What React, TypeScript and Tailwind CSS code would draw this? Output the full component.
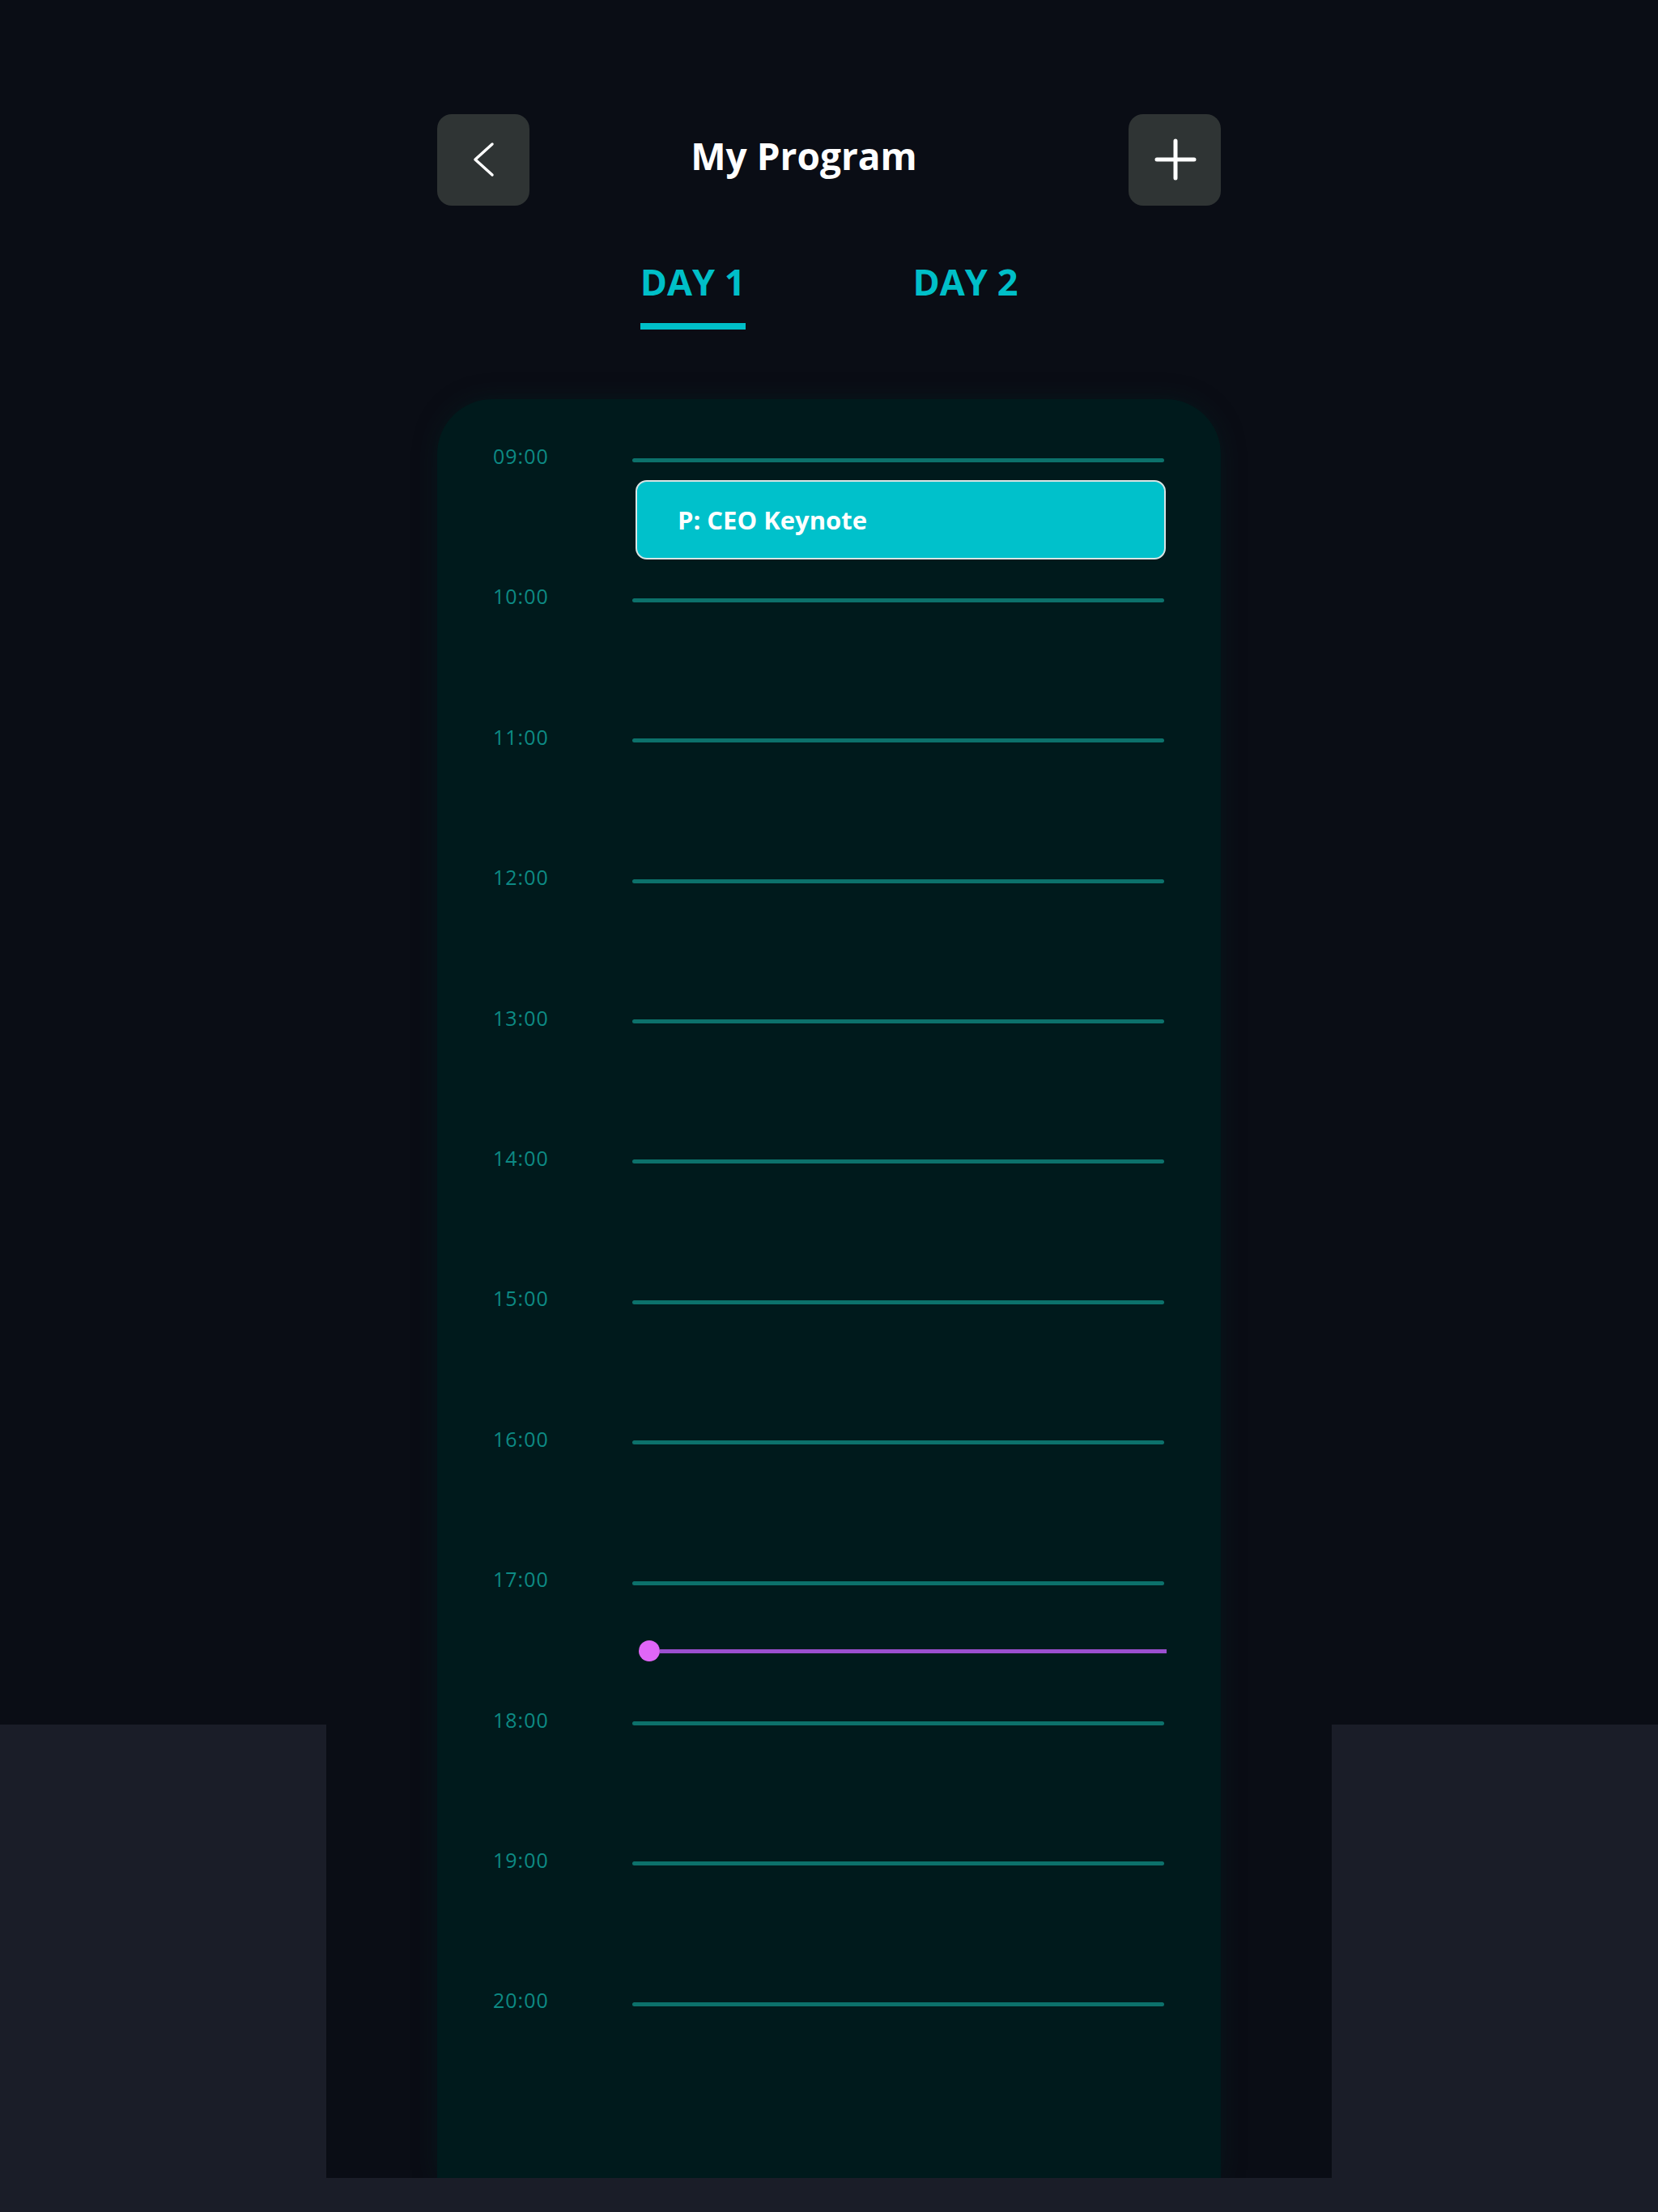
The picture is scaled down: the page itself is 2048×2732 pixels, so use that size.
const HOURS = ['09:00', '10:00', '11:00', '12:00', '13:00', '14:00', '15:00', '16:00', '17:00', '18:00', '19:00', '20:00'];

function IconButton({ children }: { children: React.ReactNode }) {
  return (
    <button className="w-[114px] h-[113px] rounded-[18px] bg-[#2f3434] flex items-center justify-center">
      {children}
    </button>
  );
}

export default function App() {
  return (
    <div
      className="w-full min-h-[2732px] bg-[linear-gradient(to_bottom,#0a0d15_2130px,#1a1d28_2130px)]"
      style={{ fontFamily: '"Open Sans", "Noto Sans", sans-serif' }}
    >
      <div className="mx-auto w-[1242px] h-[2690px] bg-[#0a0d15] overflow-hidden flex flex-col items-center">
        {/* header */}
        <div className="w-[968px] mt-[141px] flex items-center justify-between">
          <IconButton>
            <svg width="114" height="113" viewBox="0 0 114 113" fill="none">
              <path d="M68 37 L47 56 L68 75" stroke="white" strokeWidth="3.5" strokeLinecap="round" strokeLinejoin="round" />
            </svg>
          </IconButton>
          <h1 className="text-[46px] leading-none font-bold text-white mr-[62px] mb-[12px]">My Program</h1>
          <IconButton>
            <svg width="114" height="113" viewBox="0 0 114 113" fill="none">
              <path d="M58 33 V79 M35 56 H81" stroke="white" strokeWidth="5" strokeLinecap="round" />
            </svg>
          </IconButton>
        </div>

        {/* tabs */}
        <div className="mt-[71px] flex gap-[207px]">
          <div className="flex flex-col">
            <span className="text-[45px] leading-none font-bold text-[#00bfc8]">DAY 1</span>
            <span className="mt-[29px] h-[8px] bg-[#00bfc8]" />
          </div>
          <div className="flex flex-col">
            <span className="text-[45px] leading-none font-bold text-[#00bfc8]">DAY 2</span>
          </div>
        </div>

        {/* timeline card */}
        <div className="relative mt-[86px] w-[968px] flex-1 rounded-t-[68px] bg-[#001a1c] shadow-[0_0_30px_rgba(0,40,40,0.35)]">
          <div className="pt-[60px] pl-[69px] pr-[70px] flex flex-col gap-[143.4px]">
            {HOURS.map((h) => (
              <div key={h} className="h-[30px] flex items-center">
                <span className="w-[172px] mb-[9px] text-[25px] leading-none tracking-[1px] text-[#0d8a84]">{h}</span>
                <span className="flex-1 h-[5px] rounded-full bg-[#0c716b]" />
              </div>
            ))}
          </div>

          {/* event */}
          <div className="absolute top-[100px] left-[245px] w-[655px] h-[98px] rounded-[14px] border-2 border-[#d8e4e4] bg-[#00c1cb] flex items-center pl-[50px]">
            <span className="text-[31px] leading-none font-bold text-white">P: CEO Keynote</span>
          </div>

          {/* now indicator */}
          <div className="absolute top-[1533px] left-[249px] w-[652px] flex items-center">
            <span className="w-[26px] h-[26px] rounded-full bg-[#e066f7]" />
            <span className="flex-1 h-[5px] bg-[#9a4fcf]" />
          </div>
        </div>
      </div>
    </div>
  );
}
